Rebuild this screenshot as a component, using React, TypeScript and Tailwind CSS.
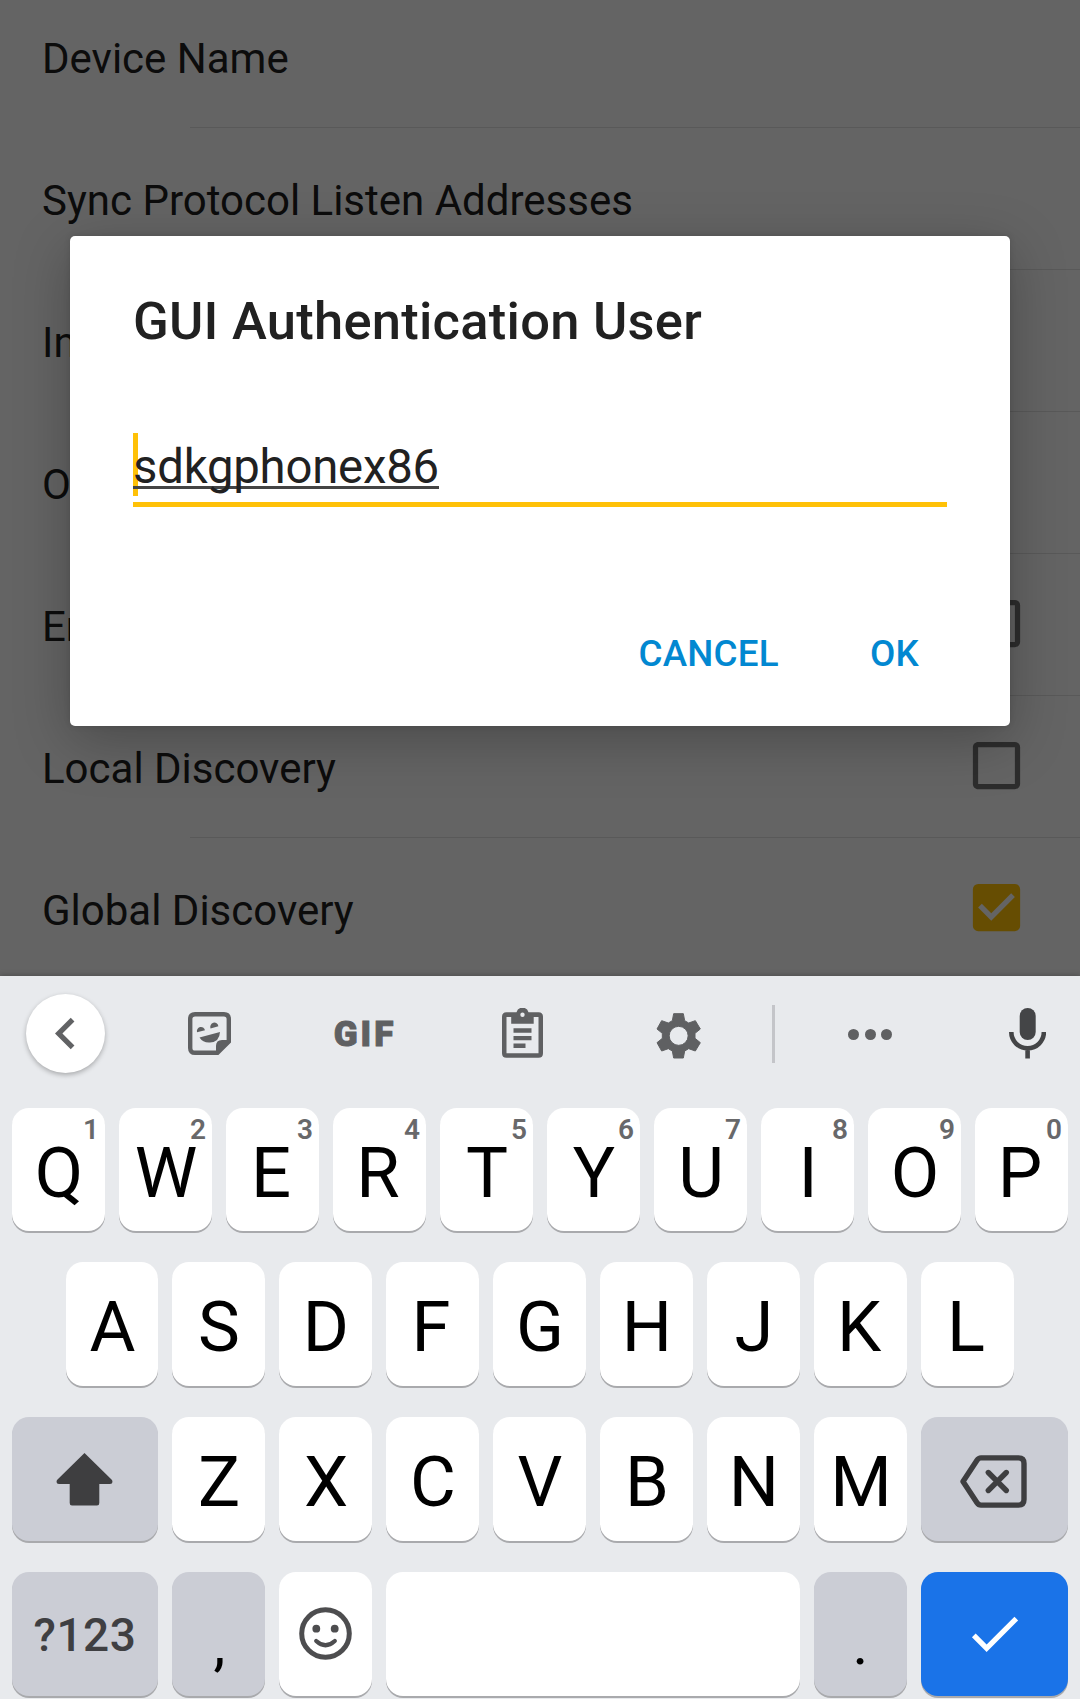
import type { ReactNode } from "react";
import { MdCheck, MdCheckBox, MdCheckBoxOutlineBlank, MdChevronLeft } from "react-icons/md";

type Setting = { label: string; checked?: boolean };

const settings: Setting[] = [
  { label: "Device Name" },
  { label: "Sync Protocol Listen Addresses" },
  { label: "In" },
  { label: "Ou" },
  { label: "En", checked: false },
  { label: "Local Discovery", checked: false },
  { label: "Global Discovery", checked: true },
];

function SettingRow({ label, checked }: Setting) {
  return (
    <div className="flex h-[142px] shrink-0 flex-col">
      <div className="flex flex-1 items-center justify-between pt-[5px] pr-[52.5px] pl-[42px]">
        <span className="text-[42px] leading-[50px] whitespace-nowrap text-[#202020]">{label}</span>
        {checked !== undefined &&
          (checked ? (
            <MdCheckBox className="-mt-[7px] size-[63px] text-[#ffc107]" />
          ) : (
            <MdCheckBoxOutlineBlank className="-mt-[7px] size-[63px] text-[#717171]" />
          ))}
      </div>
      <div className="ml-[190px] h-px bg-[#dfdfdf]" />
    </div>
  );
}

function Dialog() {
  return (
    <div className="absolute top-[236px] left-[70px] flex h-[490px] w-[940px] flex-col rounded-[5px] bg-white px-[63px] shadow-[0_14px_55px_rgba(0,0,0,0.26),0_0_6px_rgba(0,0,0,0.12)]">
      <h1 className="mt-[54px] text-[52.5px] leading-[62px] font-medium tracking-[0.25px] whitespace-nowrap text-[#212121]">
        GUI Authentication User
      </h1>
      <div className="relative mt-[81px] h-[74px] border-b-[5px] border-[#ffc107]">
        <div className="absolute top-0 left-0 h-[63px] w-[5px] bg-[#ffc107]" />
        <span className="relative inline-block h-[56px] border-b-[3px] border-[#444] text-[47.25px] leading-[68px] tracking-[-0.2px] whitespace-nowrap text-[#212121]">
          sdkgphonex86
        </span>
      </div>
      <div className="mt-[125px] flex justify-end gap-[91px] pr-[28px] text-[36.75px] leading-[44px] font-medium tracking-[0.25px] text-[#0288d1]">
        <button>CANCEL</button>
        <button>OK</button>
      </div>
    </div>
  );
}

function StickerIcon() {
  return (
    <svg className="size-[43px]" viewBox="0 0 43 43" fill="none">
      <path d="M7 2.2H36Q40.8 2.2 40.8 7V29.5L29.5 40.8H7Q2.2 40.8 2.2 36V7Q2.2 2.2 7 2.2Z" stroke="#5f6062" strokeWidth="4.4" />
      <path d="M28 41V34Q28 28 34 28H41Z" fill="#5f6062" />
      <path d="M9 20.3A4.1 4.3 0 1 1 17 18.2Z" fill="#5f6062" />
      <path d="M22.5 16.4A4.1 4.3 0 1 1 30.4 14.3Z" fill="#5f6062" />
      <path d="M11.5 25.5L32 20Q31.500 30 22 30.500Q15 31 11.500 25.500Z" fill="#5f6062" />
    </svg>
  );
}

function ClipboardIcon() {
  return (
    <svg className="h-[50px] w-[41px]" viewBox="0 0 41 50" fill="#5f6062">
      <path
        fillRule="evenodd"
        d="M4.500 4.300H14.500A6.200 6.200 0 0 1 26.500 4.300H36.500Q41 4.300 41 8.800V45.200Q41 49.700 36.500 49.700H4.500Q0 49.700 0 45.200V8.800Q0 4.300 4.500 4.300ZM4.500 9V45.200H36.500V9H31.700V15.700H9.200V9ZM20.500 4.500A2.200 2.200 0 1 0 20.500 8.900A2.200 2.200 0 1 0 20.500 4.500Z"
      />
      <path d="M11.500 20.300H29.500V24.800H11.500ZM11.500 28H29.500V32.300H11.500ZM11.500 35.600H23.500V40H11.500Z" />
    </svg>
  );
}

function GearIcon() {
  return (
    <svg className="h-[46px] w-[45px]" viewBox="769 128 135 138">
      <path
        fill="#5f6062"
        stroke="#5f6062"
        strokeWidth="3"
        strokeLinejoin="round"
        fillRule="evenodd"
        d="M822 130H851L855 151L867 158L887 151L902 176L886 189V204L902 217L887 242L867 235L855 242L851 263H822L818 242L806 235L786 242L772 217L788 204V189L772 176L786 151L806 158L818 151ZM837 168A28.500 28.500 0 1 0 837 225A28.500 28.500 0 1 0 837 168Z"
      />
    </svg>
  );
}

function MicIcon() {
  return (
    <svg className="h-[51px] w-[37px]" viewBox="0 0 37 51">
      <rect x="10.700" y="0" width="16" height="32" rx="8" fill="#444547" />
      <path d="M2.300 24A16.300 16.300 0 0 0 34.900 24M18.600 40V50.500" fill="none" stroke="#444547" strokeWidth="4.600" />
    </svg>
  );
}

function ShiftIcon() {
  return (
    <svg className="h-[53px] w-[57px]" viewBox="0 0 57 53" fill="#3e3e40">
      <path d="M28.500 0L56 27Q57.500 31 54 31H43.300V50Q43.300 52.500 41 52.500H16Q13.700 52.500 13.700 50V31H3Q-0.500 31 1 27Z" />
    </svg>
  );
}

function BackspaceIcon() {
  return (
    <svg className="h-[53px] w-[67px]" viewBox="0 0 67 53" fill="none" stroke="#3e3e40" strokeWidth="5.400" strokeLinejoin="round" strokeLinecap="round">
      <path d="M21 2.900H58.500Q64 2.900 64 8.400V44.600Q64 50.100 58.500 50.100H21Q18.500 50.100 17 47.800L3 26.500L17 5.200Q18.500 2.900 21 2.900Z" />
      <path d="M28.300 17.500L46.300 35.500M46.300 17.500L28.300 35.500" />
    </svg>
  );
}

function SmileIcon() {
  return (
    <svg className="size-[53px]" viewBox="0 0 53 53" fill="none" stroke="#4d4d4f" strokeWidth="5">
      <circle cx="26.500" cy="26.500" r="23.800" />
      <circle cx="17.300" cy="21.700" r="3.900" fill="#4d4d4f" stroke="none" />
      <circle cx="35.700" cy="21.700" r="3.900" fill="#4d4d4f" stroke="none" />
      <path d="M17.200 34Q26.500 42.500 35.800 34" strokeWidth="4.200" strokeLinecap="round" />
    </svg>
  );
}

function Toolbar() {
  return (
    <div className="flex h-[116px] items-center">
      <div className="flex w-[131px] justify-center pb-[1px]">
        <div className="flex size-[79px] items-center justify-center rounded-full bg-white shadow-[0_2px_5px_rgba(0,0,0,0.28)]">
          <MdChevronLeft className="size-[63px] text-[#616264]" />
        </div>
      </div>
      <div className="flex w-[157px] justify-center pb-[2px]">
        <StickerIcon />
      </div>
      <div className="flex w-[153px] justify-center pt-[2px] pl-[1px] text-[35px] leading-[40px] font-black tracking-[3px] text-[#5f6062] [-webkit-text-stroke:1px_#5f6062]">
        GIF
      </div>
      <div className="flex w-[162px] justify-center pb-[2px]">
        <ClipboardIcon />
      </div>
      <div className="flex w-[152px] justify-center pt-[3px] pr-px">
        <GearIcon />
      </div>
      <div className="flex w-[37px] justify-center">
        <div className="h-[58px] w-[3px] bg-[#c4c5c9]" />
      </div>
      <div className="flex w-[156px] justify-center gap-[5.500px]">
        <span className="size-[11px] rounded-full bg-[#5f6062]" />
        <span className="size-[11px] rounded-full bg-[#5f6062]" />
        <span className="size-[11px] rounded-full bg-[#5f6062]" />
      </div>
      <div className="pb-[2px] pl-[61px]">
        <MicIcon />
      </div>
    </div>
  );
}

function Key({ children, className = "flex-1 bg-white", hint }: { children?: ReactNode; className?: string; hint?: string }) {
  return (
    <div className={`relative flex items-center justify-center rounded-[17px] text-[70.500px] leading-[80px] text-black shadow-[0_2px_0_#a9aaad] ${className}`}>
      {children}
      {hint && (
        <span className="absolute top-[8px] right-[6px] text-[28px] leading-[28px] font-semibold text-[#68686a]">{hint}</span>
      )}
    </div>
  );
}

// Letters with an open right side sit slightly left of the key's centre.
function Letter({ char }: { char: string }) {
  return <span className={"ERFKLP".includes(char) ? "pt-[6px] pr-[3px]" : "pt-[6px] pl-px"}>{char}</span>;
}

function Keyboard() {
  return (
    <div className="relative h-[723px] bg-[#e8eaed] shadow-[0_0_6px_rgba(0,0,0,0.3)]">
      <Toolbar />
      <div className="flex flex-col gap-[31px] pt-4">
        <div className="flex h-[123px] gap-[14px] px-3">
          {"QWERTYUIOP".split("").map((k, i) => (
            <Key key={k} hint={String((i + 1) % 10)}>
              <Letter char={k} />
            </Key>
          ))}
        </div>
        <div className="flex h-[124px] gap-[14px] px-[66px]">
          {"ASDFGHJKL".split("").map((k) => (
            <Key key={k} className={k === "A" ? "w-[92px] bg-white" : "flex-1 bg-white"}>
              <Letter char={k} />
            </Key>
          ))}
        </div>
        <div className="flex h-[124px] gap-[14px] px-3">
          <Key className="w-[146px] bg-[#cbcdd5] pr-px">
            <ShiftIcon />
          </Key>
          {"ZXCVBNM".split("").map((k) => (
            <Key key={k}>
              <Letter char={k} />
            </Key>
          ))}
          <Key className="w-[147px] bg-[#cbcdd5] pt-[4px] pr-[2px]">
            <BackspaceIcon />
          </Key>
        </div>
        <div className="flex h-[124px] gap-[14px] px-3">
          <Key className="w-[146px] bg-[#cbcdd5]">
            <span className="pt-[2px] text-[46px] leading-[54px] font-medium tracking-[0.500px] text-[#3f3f42]">?123</span>
          </Key>
          <Key className="w-[93px] bg-[#cbcdd5]">
            <span className="pt-[20px] pl-[2px] text-[60px]">,</span>
          </Key>
          <Key className="w-[93px] bg-white pb-[2px]">
            <SmileIcon />
          </Key>
          <Key />
          <Key className="w-[93px] bg-[#cbcdd5]">
            <span className="pt-[20px] text-[60px]">.</span>
          </Key>
          <Key className="w-[147px] bg-[#1a73e8] pb-[2px]">
            <MdCheck className="size-[63px] text-white" />
          </Key>
        </div>
      </div>
    </div>
  );
}

export default function App() {
  return (
    <div className="h-[1699px] w-[1080px] overflow-hidden font-['Roboto',sans-serif]">
      <div className="relative h-[976px] overflow-hidden bg-[#fafafa]">
        <div className="-mt-[14px] flex flex-col">
          {settings.map((s) => (
            <SettingRow key={s.label} {...s} />
          ))}
        </div>
        <div className="absolute inset-0 bg-black/60" />
        <Dialog />
      </div>
      <Keyboard />
    </div>
  );
}
